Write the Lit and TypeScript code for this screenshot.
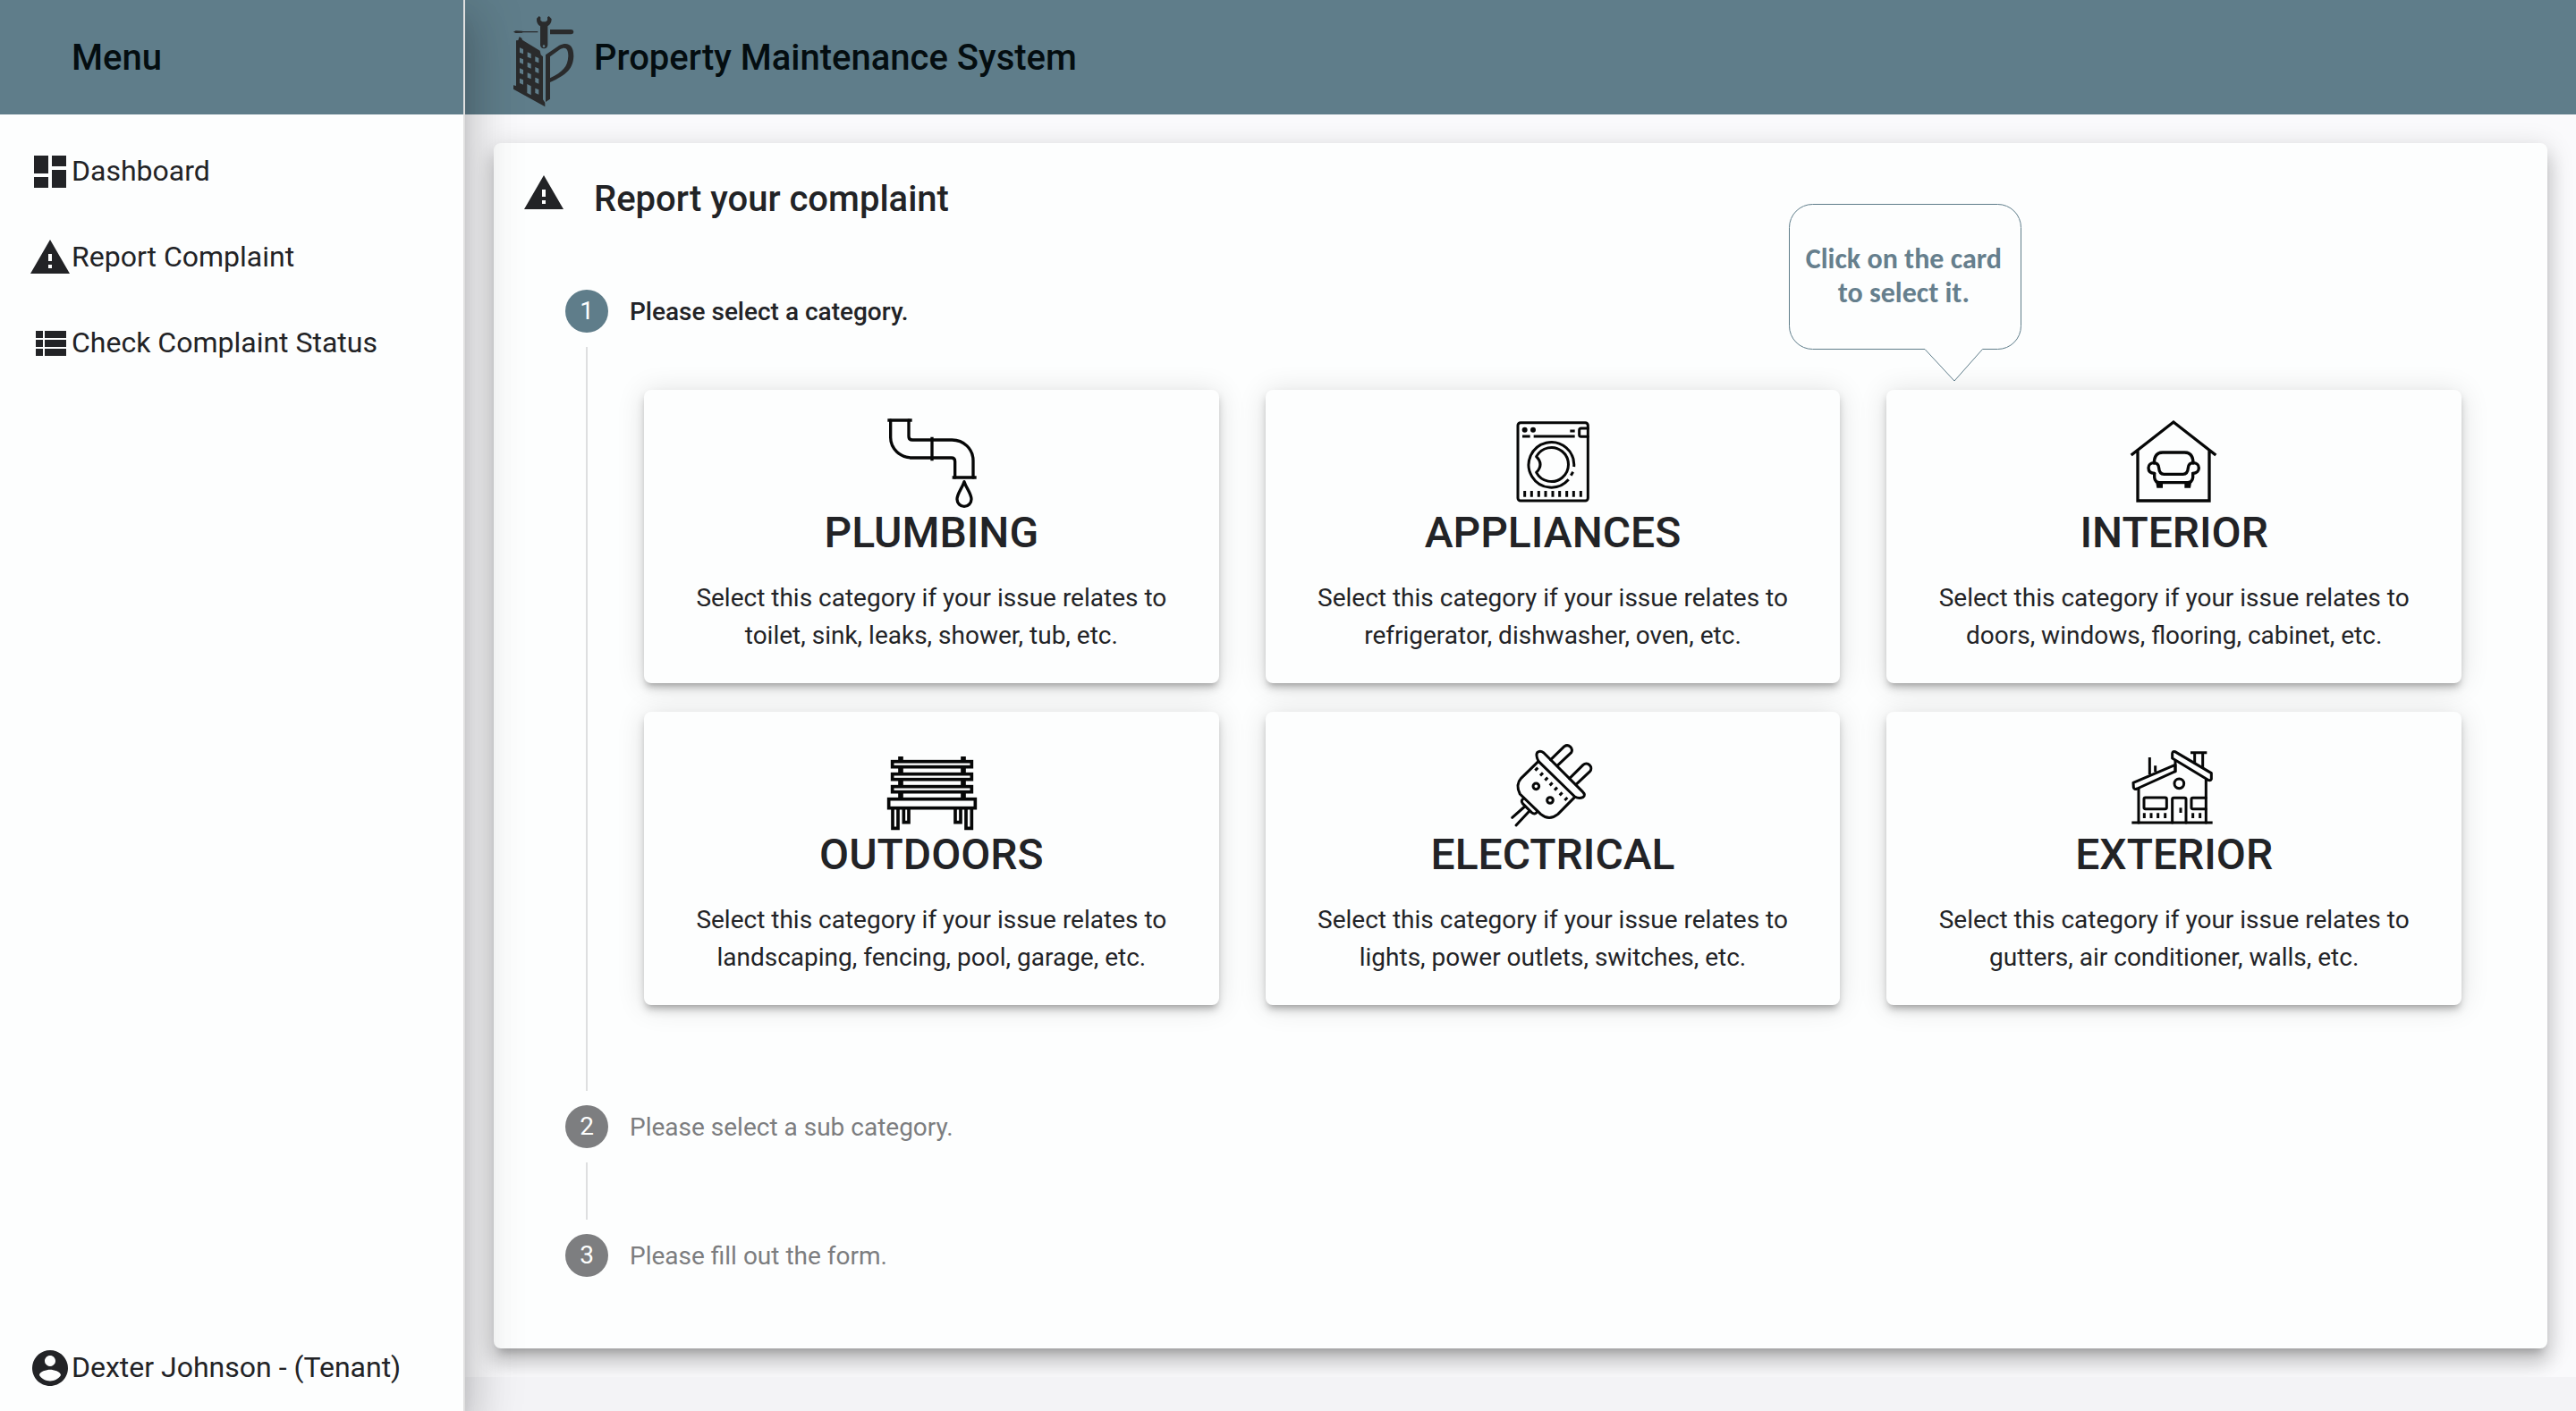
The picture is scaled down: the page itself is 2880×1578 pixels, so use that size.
import { LitElement, html, svg, css, type TemplateResult, type SVGTemplateResult } from "lit";
import { customElement, property } from "lit/decorators.js";

/* ---------- Small interface glyphs, 24-unit grid ---------- */

const GLYPHS: Record<string, SVGTemplateResult> = {
  dashboard: svg`<path d="M3 13h8V3H3v10zm0 8h8v-6H3v6zm10 0h8V11h-8v10zm0-18v6h8V3h-8z"/>`,
  warning: svg`<path d="M1 21h22L12 2 1 21zm12-3h-2v-2h2v2zm0-4h-2v-4h2v4z"/>`,
  list: svg`<path d="M4 14h4v-4H4v4zm0 5h4v-4H4v4zM4 9h4V5H4v4zm5 5h12v-4H9v4zm0 5h12v-4H9v4zM9 5v4h12V5H9z"/>`,
  account: svg`<path d="M12 2C6.480 2 2 6.480 2 12s4.480 10 10 10 10-4.480 10-10S17.520 2 12 2zm0 3c1.660 0 3 1.340 3 3s-1.340 3-3 3-3-1.340-3-3 1.340-3 3-3zm0 14.200c-2.500 0-4.710-1.280-6-3.220.030-1.990 4-3.080 6-3.080 1.990 0 5.970 1.090 6 3.080-1.290 1.940-3.500 3.220-6 3.220z"/>`,
};

const glyph = (name: string) =>
  html`<svg class="glyph" viewBox="0 0 24 24" aria-hidden="true">${GLYPHS[name]}</svg>`;

/* ---------- Category drawings ---------- */

const ticks = (xs: number[], from: number, to: number) =>
  svg`<path class="butt" d=${xs.map((x) => `M${x} ${from}V${to}`).join("")} />`;

const plumbing = html`<svg class="drawing bold" viewBox="93 84 300 300" aria-hidden="true">
  <path class="butt" d="M97 90H179M314 282H395M246 146V226" />
  <path d="M107 90V148C107 186 140 216 180 216H311Q323 216 323 228V282" />
  <path d="M168 90V144Q168 156 180 156H313C352 156 384 186 384 226V282" />
  <path d="M354 296C347 318 330 336 330 355A24 24 0 0 0 378 355C378 336 361 318 354 296Z" />
</svg>`;

const appliances = html`<svg class="drawing" viewBox="78 54 300 300" aria-hidden="true">
  <rect x="111" y="68" width="235" height="262" rx="9" />
  <circle cx="134" cy="92" r="9" class="solid" />
  <circle cx="162" cy="92" r="9" class="solid" />
  <path class="butt" d="M286 96H302M126 114H152M164 114H302" />
  <path d="M346 87H323Q317 87 317 93V109Q317 115 323 115H346" />
  <path class="butt" d="M299 216A76 76 0 1 0 281 259" />
  <path class="butt" d="M296 233L289 245" />
  <path d="M173 182A57 57 0 1 1 173 235Q199 208 173 182Z" />
  ${ticks([134, 157, 181, 204, 228, 251, 275, 298, 322], 297, 317)}
</svg>`;

const interior = html`<svg class="drawing bold" viewBox="63 54 300 300" aria-hidden="true">
  <path class="butt sharp" d="M68 177L210 66L352 177M90 162V330H330V162" />
  <path d="M145 204C145 182 154 168 174 168H247C267 168 276 182 276 204" />
  <path d="M146 238C132 238 126 230 126 220C126 210 134 203 144 203C156 203 160 211 161 220C162 233 167 241 178 241H242C253 241 258 233 259 220C260 211 265 203 276 203C287 203 295 210 295 220C295 230 288 238 275 238" />
  <path d="M146 238V252Q148 269 164 269H256Q273 269 275 252V238" />
  <path d="M151 270H174V287H154ZM247 270H270L267 287H247Z" class="solid" />
</svg>`;

const outdoors = html`<svg class="drawing" viewBox="93 24 300 300" aria-hidden="true">
  <path class="post" d="M141 78V216M351 78V216" />
  <g class="planks">
    <rect x="113" y="95" width="266" height="18" />
    <rect x="113" y="137" width="266" height="18" />
    <rect x="113" y="179" width="266" height="18" />
    <path d="M114 252V319H132V252M151 252V299H168V252M324 252V299H342V252M360 252V319H379V252" />
    <rect x="101" y="221" width="290" height="30" />
  </g>
</svg>`;

const electrical = html`<svg class="drawing" viewBox="78 54 300 300" aria-hidden="true">
  <path d="M180 124Q170 104 176 95Q185 86 198 96L328 226Q340 238 329 245Q316 251 302 243Z" />
  <path d="M221 119L267 74A16 16 0 0 1 290 95L243 139M284 182L330 136A16 16 0 0 1 353 158L306 202" />
  <path d="M180 124L122 181Q102 203 118 234L188 302Q216 325 245 302L302 244" />
  <circle cx="172" cy="208" r="10" />
  <circle cx="219" cy="255" r="10" />
  <path class="butt" d="M169 155L178 146M186 172L195 163M202 188L211 179M218 205L227 196M234 221L243 212M251 238L260 229M268 255L277 246" />
  <path d="M131 248Q119 256 127 266L157 296Q168 305 175 294" />
  <path d="M134 276L92 313M149 292L105 339" />
</svg>`;

const exterior = html`<svg class="drawing" viewBox="63 54 300 300" aria-hidden="true">
  <path class="butt" d="M70 330H341" />
  <path d="M93 216V330M319 186V330" />
  <path d="M75 196L216 136V158L88 216Q78 220 76 212Z" />
  <path d="M206 114V98Q207 89 215 92L337 164V184Q334 190 326 187Z" />
  <path d="M216 124V158" />
  <path class="butt" d="M267 95H322M281 95V130M308 95V146M130 111V168M149 139V160" />
  <circle cx="229" cy="199" r="16" />
  <rect x="111" y="246" width="76" height="38" rx="5" />
  <path d="M206 330V252Q206 247 211 247H247Q252 247 252 252V330M319 247H275Q270 247 270 252V279Q270 284 275 284H319" />
  <path class="butt" d="M234 280V297" />
  ${ticks([112, 135, 158, 182, 275, 299], 298, 315)}
</svg>`;

/* ---------- Brand mark: tower, wrench and screwdriver ---------- */

const WINDOWS: Array<[number, number]> = [
  [63, 136], [63, 170], [63, 205], [63, 239],
  [89, 151], [89, 185], [89, 220],
  [115, 166], [115, 201], [115, 236], [115, 272],
];

const logo = html`<svg class="logo" viewBox="0 -12 312 360" role="img" aria-label="Logo">
  <path d="M120 38L128 30L133 34V44L139 49H150L156 44V34L161 30L170 40Q170 56 157 64V127Q156 139 145 139Q133 139 132 127V64Q119 56 120 38Z" />
  <path d="M42 83L50 79L72 80L73 81H124V85H73L72 86L50 87Z" />
  <path d="M165 75H236Q244 76 244 83Q244 90 236 91H165Z" />
  <path d="M51 112L58 111L62 99L70 104L72 110L131 146L134 160L141 166V310L148 320V334L42 275V262L51 264Z" />
  <path fill-rule="evenodd" d="M150 160L196 128C226 114 244 128 244 164C242 206 222 226 165 252V308L150 318ZM165 166V238C208 216 224 200 226 164C226 138 216 132 198 142Z" />
  <circle class="cut" cx="144" cy="131" r="4" />
  ${WINDOWS.map(([x, y]) => svg`<path class="cut" d="M${x} ${y}L${x + 12} ${y + 5}V${y + 21}L${x} ${y + 16}Z" />`)}
  <path class="cut" d="M88 258L101 265V295L88 288Z" />
</svg>`;

/* ---------- Data ---------- */

interface Category {
  title: string;
  lines: [string, string];
  drawing: TemplateResult;
}

const PREFIX = "Select this category if your issue relates to";

const CATEGORIES: Category[] = [
  { title: "PLUMBING", lines: [PREFIX, "toilet, sink, leaks, shower, tub, etc."], drawing: plumbing },
  { title: "APPLIANCES", lines: [PREFIX, "refrigerator, dishwasher, oven, etc."], drawing: appliances },
  { title: "INTERIOR", lines: [PREFIX, "doors, windows, flooring, cabinet, etc."], drawing: interior },
  { title: "OUTDOORS", lines: [PREFIX, "landscaping, fencing, pool, garage, etc."], drawing: outdoors },
  { title: "ELECTRICAL", lines: [PREFIX, "lights, power outlets, switches, etc."], drawing: electrical },
  { title: "EXTERIOR", lines: [PREFIX, "gutters, air conditioner, walls, etc."], drawing: exterior },
];

const NAV = [
  { icon: "dashboard", label: "Dashboard" },
  { icon: "warning", label: "Report Complaint" },
  { icon: "list", label: "Check Complaint Status" },
];

const shared = css`
  * {
    box-sizing: border-box;
  }
  h1,
  h2,
  h3,
  p,
  ol,
  ul {
    margin: 0;
    padding: 0;
    list-style: none;
  }
  .glyph {
    display: block;
    flex: none;
    width: 48px;
    height: 48px;
    fill: currentColor;
  }
`;

@customElement("side-menu")
export class SideMenu extends LitElement {
  static styles = [
    shared,
    css`
      :host {
        display: flex;
        flex-direction: column;
        background: #fdfefe;
        border-right: 2px solid #e0e0e0;
        box-shadow: 0 16px 20px -10px rgba(0, 0, 0, 0.2), 0 32px 48px 4px rgba(0, 0, 0, 0.14),
          0 12px 60px 10px rgba(0, 0, 0, 0.12);
      }
      .head {
        display: flex;
        align-items: center;
        height: 128px;
        padding: 2px 80px 0;
        background: #5f7d8a;
        color: #040d10;
      }
      .head h2 {
        font-size: 40px;
        line-height: 48px;
        font-weight: 500;
      }
      nav {
        flex: 1;
        display: flex;
        flex-direction: column;
        padding-top: 16px;
      }
      a {
        display: flex;
        align-items: center;
        height: 96px;
        padding: 0 32px;
        font-size: 32px;
        line-height: 48px;
        color: inherit;
        text-decoration: none;
      }
      a span {
        padding-bottom: 3px;
      }
      .user {
        margin-top: auto;
      }
    `,
  ];

  render() {
    return html`
      <div class="head"><h2>Menu</h2></div>
      <nav aria-label="Menu">
        ${NAV.map((item) => html`<a href="#">${glyph(item.icon)}<span>${item.label}</span></a>`)}
        <a class="user" href="#">${glyph("account")}<span>Dexter Johnson - (Tenant)</span></a>
      </nav>
    `;
  }
}

@customElement("category-card")
export class CategoryCard extends LitElement {
  @property({ attribute: false }) category!: Category;

  static styles = [
    shared,
    css`
      :host {
        display: block;
      }
      button {
        display: flex;
        flex-direction: column;
        align-items: center;
        width: 100%;
        padding: 32px;
        border: 0;
        border-radius: 8px;
        background: #fdfefe;
        color: inherit;
        font: inherit;
        text-align: center;
        cursor: pointer;
        box-shadow: 0 6px 6px -4px rgba(0, 0, 0, 0.2), 0 6px 10px 0 rgba(0, 0, 0, 0.16),
          0 2px 32px 0 rgba(0, 0, 0, 0.12);
      }
      .drawing {
        display: block;
        width: 100px;
        height: 100px;
        overflow: visible;
        fill: none;
        stroke: #060707;
        stroke-width: 9px;
        stroke-linecap: round;
        stroke-linejoin: round;
      }
      .bold {
        stroke-width: 10px;
      }
      .butt {
        stroke-linecap: butt;
      }
      .sharp {
        stroke-linejoin: miter;
      }
      .solid {
        fill: #060707;
        stroke: none;
      }
      .post {
        stroke-width: 17px;
        stroke-linecap: butt;
      }
      .planks {
        fill: #fdfefe;
        stroke-width: 11px;
        stroke-linejoin: miter;
      }
      .title {
        font-size: 48px;
        line-height: 56px;
        font-weight: 500;
      }
      .text {
        margin-top: 24px;
        font-size: 28px;
        line-height: 42px;
      }
      .text span {
        display: block;
      }
    `,
  ];

  render() {
    const { title, lines, drawing } = this.category;
    return html`<button type="button">
      ${drawing}
      <span class="title">${title}</span>
      <span class="text">${lines.map((line) => html`<span>${line}</span>`)}</span>
    </button>`;
  }
}

@customElement("app-root")
export class AppRoot extends LitElement {
  static styles = [
    shared,
    css`
      :host {
        display: grid;
        grid-template-columns: 520px minmax(0, 1fr);
        min-height: 100vh;
        background: #f3f3f6;
        color: #222326;
        font-family: Roboto, "Liberation Sans", sans-serif;
        font-size: 28px;
      }
      side-menu {
        position: relative;
        z-index: 1;
      }
      .page {
        min-width: 0;
      }
      header {
        display: flex;
        align-items: center;
        height: 128px;
        padding-left: 40px;
        background: #5f7d8a;
        color: #040d10;
      }
      .logo {
        display: block;
        width: 104px;
        height: 120px;
        fill: #2a2b2c;
      }
      .cut {
        fill: #5f7d8a;
      }
      h1,
      .panel h2 {
        font-size: 40px;
        line-height: 48px;
        font-weight: 500;
      }
      h1 {
        padding-top: 2px;
      }
      main {
        padding: 32px;
        background: #fafafc;
        overflow: hidden;
      }
      .panel {
        padding: 32px 32px 80px;
        border-radius: 8px;
        background: #fdfefe;
        box-shadow: 0 10px 10px -6px rgba(0, 0, 0, 0.2), 0 16px 20px 2px rgba(0, 0, 0, 0.14),
          0 6px 28px 4px rgba(0, 0, 0, 0.12);
      }
      .panel-head {
        display: flex;
        gap: 32px;
        height: 132px;
      }
      .panel-head h2 {
        padding-top: 7px;
      }
      .steps {
        padding: 0 64px 0 48px;
      }
      .step {
        display: grid;
        grid-template-columns: 48px minmax(0, 1fr);
        column-gap: 24px;
        min-height: 144px;
      }
      .step:last-child {
        min-height: 48px;
      }
      .rail {
        display: flex;
        flex-direction: column;
        align-items: center;
      }
      .badge {
        width: 48px;
        height: 48px;
        border-radius: 50%;
        background: #7d7e80;
        color: #fdfefe;
        line-height: 48px;
        text-align: center;
      }
      .line {
        flex: 1;
        width: 2px;
        margin: 16px 0;
        background: #dedfe0;
      }
      .step:last-child .line {
        display: none;
      }
      .label {
        height: 48px;
        line-height: 50px;
        font-size: 28px;
        font-weight: 400;
        color: #7c7d7f;
      }
      .active .badge {
        background: #5f7d8a;
      }
      .active .label {
        color: #222326;
        font-weight: 500;
      }
      .cards {
        display: grid;
        grid-template-columns: repeat(3, minmax(0, 1fr));
        gap: 32px 52px;
        padding: 64px 0 112px 16px;
      }
      .slot {
        position: relative;
      }
      .hint {
        position: absolute;
        left: -109px;
        top: -208px;
        width: 260px;
        height: 200px;
        padding-top: 43px;
        color: #667f8d;
        font-family: Carlito, Lato, "Liberation Sans", sans-serif;
        font-size: 32px;
        line-height: 38px;
        font-weight: 700;
        text-align: center;
      }
      .hint svg {
        position: absolute;
        inset: 0;
        width: 260px;
        height: 200px;
        fill: #fdfefe;
        stroke: #5f7d8a;
        stroke-width: 1px;
      }
      .hint p {
        position: relative;
        padding-right: 4px;
      }
    `,
  ];

  private hint() {
    return html`<div class="hint" role="note">
      <svg viewBox="0 0 260 200" aria-hidden="true">
        <path
          d="M26.500 .500H233.500A26 26 0 0 1 259.500 26.500V136.500A26 26 0 0 1 233.500 162.500H216.500L185 198L152 162.500H26.500A26 26 0 0 1 .500 136.500V26.500A26 26 0 0 1 26.500 .500Z"
        />
      </svg>
      <p>Click on the card<br />to select it.</p>
    </div>`;
  }

  private step(index: number, label: string, active = false, body: unknown = "") {
    return html`<li class="step ${active ? "active" : ""}">
      <div class="rail"><span class="badge">${index}</span><span class="line"></span></div>
      <div>
        <h3 class="label">${label}</h3>
        ${body}
      </div>
    </li>`;
  }

  render() {
    const cards = html`<ul class="cards">
      ${CATEGORIES.map(
        (category) => html`<li class="slot">
          <category-card .category=${category}></category-card>
          ${category.title === "INTERIOR" ? this.hint() : ""}
        </li>`
      )}
    </ul>`;

    return html`
      <side-menu></side-menu>
      <div class="page">
        <header>${logo}<h1>Property Maintenance System</h1></header>
        <main>
          <section class="panel">
            <div class="panel-head">${glyph("warning")}<h2>Report your complaint</h2></div>
            <ol class="steps">
              ${this.step(1, "Please select a category.", true, cards)}
              ${this.step(2, "Please select a sub category.")}
              ${this.step(3, "Please fill out the form.")}
            </ol>
          </section>
        </main>
      </div>
    `;
  }
}
